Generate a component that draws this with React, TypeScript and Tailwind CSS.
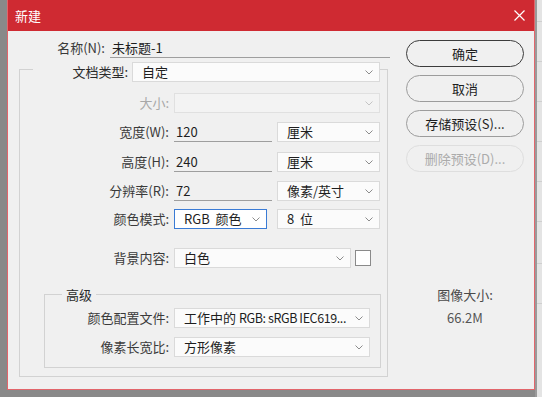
import React from 'react';

const font = { fontFamily: '"Noto Sans CJK SC", "Noto Sans", sans-serif' };

function Chevron({ light }: { light?: boolean }) {
  return (
    <svg width="8" height="5" viewBox="0 0 8 5" className="shrink-0">
      <path d="M0.5 0.5 L4 4 L7.5 0.5" fill="none" stroke={light ? '#c4c4c4' : '#8c8c8c'} strokeWidth="1" />
    </svg>
  );
}

function Select({ text, w, disabled, focused }: { text?: React.ReactNode; w: string; disabled?: boolean; focused?: boolean }) {
  return (
    <div
      className={`${w} h-[20px] flex items-center justify-between pl-[9px] pr-[6px] border ${
        focused ? 'border-[#3a7bd5] bg-white' : disabled ? 'border-[#e0e0e0] bg-[#f3f3f3]' : 'border-[#dadada] bg-[#fbfbfb]'
      }`}
    >
      <span className="text-[#1e1e1e] whitespace-nowrap">{text}</span>
      <Chevron light={disabled} />
    </div>
  );
}

function Field({ value, w }: { value: string; w: string }) {
  return (
    <div className={`${w} h-[20px] flex items-center border-b border-[#9e9e9e] pl-[2px] text-[#1e1e1e]`}>{value}</div>
  );
}

function Label({ children, w, disabled }: { children: React.ReactNode; w: string; disabled?: boolean }) {
  return (
    <div className={`${w} text-right whitespace-nowrap ${disabled ? 'text-[#a8a8a8]' : 'text-[#3a3a3a]'}`}>{children}</div>
  );
}

function Button({ children, primary, disabled }: { children: React.ReactNode; primary?: boolean; disabled?: boolean }) {
  return (
    <div
      className={`w-[118px] h-[27px] rounded-full flex items-center justify-center border ${
        primary ? 'border-[#3c3c3c]' : disabled ? 'border-[#dedede] text-[#ababab]' : 'border-[#9c9c9c]'
      } ${disabled ? '' : 'text-[#1e1e1e]'}`}
    >
      {children}
    </div>
  );
}

export default function App() {
  return (
    <div className="w-[542px] h-[397px] bg-[#898989] flex overflow-hidden text-[13px] leading-[20px]" style={font}>
      <div className="w-[7px] shrink-0" />

      <div className="w-[528px] h-[390px] shrink-0 flex flex-col border-x border-b border-[#e2656b] bg-[#f0f0f0]">
        <div className="h-[31px] bg-[#cf2a32] flex items-center justify-between pl-[7px] pr-[9px] text-white">
          <span>新建</span>
          <svg width="11" height="11" viewBox="0 0 11 11">
            <path d="M0.5 0.5 L10.5 10.5 M10.5 0.5 L0.5 10.5" stroke="#fff" strokeWidth="1.2" />
          </svg>
        </div>

        <div className="flex">
          <div className="w-[388px] flex flex-col">
            <div className="mt-[7px] flex h-[20px] items-center">
              <Label w="w-[97px]">名称(N):</Label>
              <div className="ml-[5px]">
                <Field value="未标题-1" w="w-[280px]" />
              </div>
            </div>

            <div className="mt-[11px] ml-[11px] w-[369px] h-[308px] border border-[#d2d2d2] flex flex-col">
              <div className="-mt-[8px] ml-[13px] w-[347px] h-[20px] bg-[#f0f0f0] flex items-center">
                <div className="flex-1 text-right pr-[4px] text-[#2a2a2a]">文档类型:</div>
                <Select text="自定" w="w-[248px]" />
              </div>

              <div className="mt-[11px] flex items-center">
                <Label w="w-[149px]" disabled>大小:</Label>
                <div className="ml-[5px]">
                  <Select w="w-[206px]" disabled />
                </div>
              </div>

              <div className="mt-[9px] flex items-center">
                <Label w="w-[149px]">宽度(W):</Label>
                <div className="ml-[5px] flex gap-[5px]">
                  <Field value="120" w="w-[98px]" />
                  <Select text="厘米" w="w-[103px]" />
                </div>
              </div>

              <div className="mt-[10px] flex items-center">
                <Label w="w-[149px]">高度(H):</Label>
                <div className="ml-[5px] flex gap-[5px]">
                  <Field value="240" w="w-[98px]" />
                  <Select text="厘米" w="w-[103px]" />
                </div>
              </div>

              <div className="mt-[9px] flex items-center">
                <Label w="w-[149px]">分辨率(R):</Label>
                <div className="ml-[5px] flex gap-[5px]">
                  <Field value="72" w="w-[98px]" />
                  <Select text="像素/英寸" w="w-[103px]" />
                </div>
              </div>

              <div className="mt-[8px] flex items-center">
                <Label w="w-[149px]">颜色模式:</Label>
                <div className="ml-[5px] flex gap-[10px]">
                  <Select text={<>RGB&nbsp;&nbsp;颜色</>} w="w-[93px]" focused />
                  <Select text={<>8&nbsp;&nbsp;位</>} w="w-[103px]" />
                </div>
              </div>

              <div className="mt-[19px] flex items-center">
                <Label w="w-[149px]">背景内容:</Label>
                <div className="ml-[5px] flex items-center gap-[4px]">
                  <Select text="白色" w="w-[177px]" />
                  <div className="w-[16px] h-[16px] border border-[#8a8a8a] bg-white" />
                </div>
              </div>

              <div className="mt-[26px] ml-[24px] w-[337px] h-[74px] border border-[#d2d2d2] flex flex-col">
                <div className="-mt-[9px] ml-[17px] px-[4px] w-fit h-[17px] leading-[17px] bg-[#f0f0f0] text-[#2a2a2a]">高级</div>
                <div className="mt-[5px] flex items-center">
                  <Label w="w-[124px]">颜色配置文件:</Label>
                  <div className="ml-[5px]">
                    <Select
                      text={
                        <>
                          工作中的 <span className="tracking-[-0.4px] text-[12.5px]">RGB: sRGB IEC619...</span>
                        </>
                      }
                      w="w-[196px]"
                    />
                  </div>
                </div>
                <div className="mt-[9px] flex items-center">
                  <Label w="w-[124px]">像素长宽比:</Label>
                  <div className="ml-[5px]">
                    <Select text="方形像素" w="w-[196px]" />
                  </div>
                </div>
              </div>
            </div>
          </div>

          <div className="ml-[10px] w-[118px] flex flex-col items-center pt-[9px] gap-[8px]">
            <Button primary>确定</Button>
            <Button>取消</Button>
            <Button>存储预设(S)...</Button>
            <Button disabled>删除预设(D)...</Button>
            <div className="mt-[105px] text-[#4a4a4a]">图像大小:</div>
            <div className="-mt-[5px] text-[#555]">66.2M</div>
          </div>
        </div>
      </div>

      <div className="flex-1 flex flex-col bg-[#e4e4e4] border-l-2 border-[#9a9a9a]">
        <div className="h-[22px] border-b border-[#cfcfcf]" />
        <div className="h-[40px] border-b border-[#cfcfcf]" />
        <div className="h-[40px] border-b border-[#cfcfcf]" />
        <div className="h-[40px] border-b border-[#cfcfcf]" />
        <div className="h-[40px] border-b border-[#cfcfcf]" />
        <div className="h-[40px] border-b border-[#cfcfcf]" />
        <div className="h-[42px] border-b border-[#cfcfcf]" />
        <div className="h-[40px] border-b border-[#cfcfcf]" />
        <div className="flex-1" />
      </div>
    </div>
  );
}
